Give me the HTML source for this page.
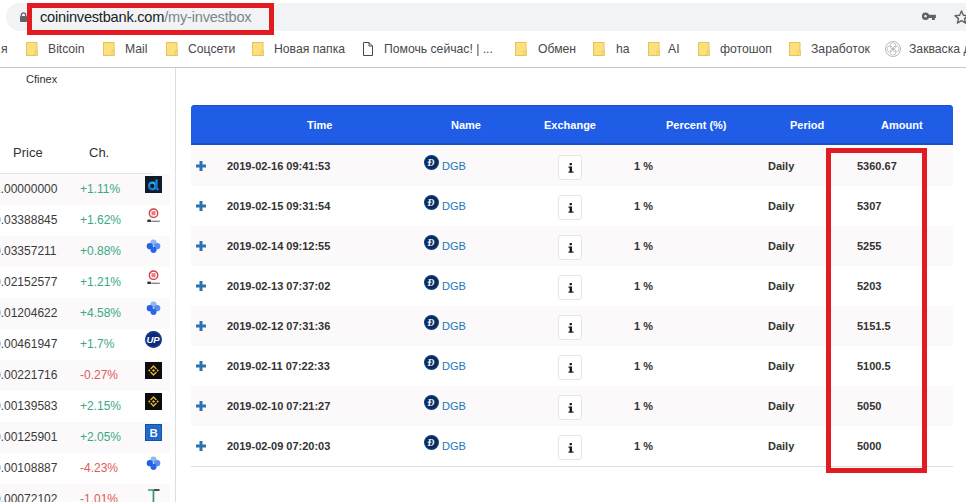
<!DOCTYPE html>
<html><head><meta charset="utf-8">
<style>
*{margin:0;padding:0;box-sizing:border-box}
html,body{width:966px;height:502px;overflow:hidden;background:#fff;font-family:"Liberation Sans",sans-serif}
.abs{position:absolute}
#omni{position:absolute;left:6px;top:3px;width:980px;height:28px;background:#f1f3f4;border-radius:14px}
#url{position:absolute;left:40px;top:9px;font-size:14.6px;letter-spacing:-0.22px;color:#202124;white-space:nowrap}
#url span{color:#80868b}
#redbox{position:absolute;left:27px;top:3px;width:247px;height:32px;border:5px solid #e21b23}
#bm{position:absolute;left:0;top:34px;width:966px;height:34px;border-bottom:1px solid #c8c8c8}
.bt{position:absolute;top:42px;font-size:12.2px;color:#46494d;white-space:nowrap}
.fd{position:absolute;top:42px}
#vline{position:absolute;left:175px;top:68px;width:1px;height:434px;background:#dedede}
.lh{position:absolute;top:145px;font-size:13px;color:#333;}
#lhline{position:absolute;left:0;top:173px;width:153px;height:1px;background:#e5e5e5}
.lrow{position:absolute;left:0;width:170px;height:31px}
.lrow.s{background:#fbf9f9}
.pr{position:absolute;left:-6px;top:8px;font-size:12px;color:#3a3a3a;white-space:nowrap}
.ch{position:absolute;left:80px;top:8px;font-size:12px}
.g{color:#3aa889}.r{color:#e05a5a}
.ic{position:absolute;left:145px;top:2px;width:17px;height:17px}
#thead{position:absolute;left:191px;top:105px;width:762px;height:40px;background:#1f5de6;border-bottom:2px solid #1b4fc4;box-shadow:inset 0 1px 0 #1b52d2;border-radius:4px 4px 0 0}
.th{position:absolute;top:14px;font-size:11px;font-weight:bold;color:#fff;white-space:nowrap}
.trow{position:absolute;left:191px;width:762px;height:40px}
.trow.s{background:#fbf9f9}
.plus{position:absolute;left:5px;top:15px;width:10px;height:10px}
.tm{position:absolute;left:36px;top:14px;font-size:11px;font-weight:bold;color:#333;white-space:nowrap}
.dg{position:absolute;left:233px;top:9px;width:15px;height:15px}
.dgt{position:absolute;left:251px;top:14px;font-size:11px;color:#2277b8}
.ib{position:absolute;left:367px;top:9px;width:24px;height:25px;background:#fff;border:1px solid #e6e6e6;border-radius:3px}
.pc{position:absolute;left:443px;top:14px;font-size:11px;font-weight:bold;color:#333}
.pd{position:absolute;left:577px;top:14px;font-size:11px;font-weight:bold;color:#333}
.am{position:absolute;left:666px;top:14px;font-size:11px;font-weight:bold;color:#333}
#tline{position:absolute;left:191px;top:466px;width:762px;height:1px;background:#ddd}
#red2{position:absolute;left:826px;top:148px;width:101px;height:325px;border:5px solid #e21b23}
</style></head><body>
<div id="omni"></div>
<svg class="abs" style="left:20px;top:12px" width="7" height="10" viewBox="0 0 7 10"><path d="M1.3 4.2V3a2.2 2.2 0 0 1 4.4 0V4.2" fill="none" stroke="#5f6368" stroke-width="1.3"/><rect x="0" y="4" width="7" height="6" rx="0.8" fill="#5f6368"/></svg>
<div id="url">coininvestbank.com<span>/my-investbox</span></div>
<div id="redbox"></div>
<svg class="abs" style="left:922px;top:12px" width="15" height="9" viewBox="0 0 15 9"><circle cx="3.5" cy="4.2" r="2.5" fill="none" stroke="#5f6368" stroke-width="2.4"/><path d="M5.5 2.8h8.4v3.1h-1v2h-3v-2H5.5z" fill="#5f6368"/></svg>
<svg class="abs" style="left:953.5px;top:10px" width="15" height="14" viewBox="0 0 15 14"><path d="M7.5 1l1.9 4.2 4.6.4-3.5 3 1.1 4.5-4.1-2.4-4.1 2.4 1.1-4.5-3.5-3 4.6-.4z" fill="none" stroke="#5f6368" stroke-width="1.4" stroke-linejoin="round"/></svg>
<div id="bm"></div>
<div class="bt" style="left:1px">я</div>
<svg class="fd" style="left:26px" width="12" height="14" viewBox="0 0 12 14"><rect x="0.5" y="0.5" width="10.5" height="13" fill="#fde07e" stroke="#e9c25a"/><rect x="9" y="9" width="2.5" height="4.5" fill="#fde07e" stroke="#e9c25a" stroke-width="0.8"/></svg>
<div class="bt" style="left:48px">Bitcoin</div>
<svg class="fd" style="left:103px" width="12" height="14" viewBox="0 0 12 14"><rect x="0.5" y="0.5" width="10.5" height="13" fill="#fde07e" stroke="#e9c25a"/><rect x="9" y="9" width="2.5" height="4.5" fill="#fde07e" stroke="#e9c25a" stroke-width="0.8"/></svg>
<div class="bt" style="left:125px">Mail</div>
<svg class="fd" style="left:166px" width="12" height="14" viewBox="0 0 12 14"><rect x="0.5" y="0.5" width="10.5" height="13" fill="#fde07e" stroke="#e9c25a"/><rect x="9" y="9" width="2.5" height="4.5" fill="#fde07e" stroke="#e9c25a" stroke-width="0.8"/></svg>
<div class="bt" style="left:188px">Соцсети</div>
<svg class="fd" style="left:252px" width="12" height="14" viewBox="0 0 12 14"><rect x="0.5" y="0.5" width="10.5" height="13" fill="#fde07e" stroke="#e9c25a"/><rect x="9" y="9" width="2.5" height="4.5" fill="#fde07e" stroke="#e9c25a" stroke-width="0.8"/></svg>
<div class="bt" style="left:274px">Новая папка</div>
<svg class="fd" style="left:363px" width="10" height="14" viewBox="0 0 10 14"><path d="M0.5 0.5h5.5l3.5 3.5v9.5h-9z M6 0.5v3.5h3.5" fill="#fff" stroke="#4a4a4a" stroke-linejoin="miter"/></svg>
<div class="bt" style="left:384px">Помочь сейчас! | ...</div>
<svg class="fd" style="left:515px" width="12" height="14" viewBox="0 0 12 14"><rect x="0.5" y="0.5" width="10.5" height="13" fill="#fde07e" stroke="#e9c25a"/><rect x="9" y="9" width="2.5" height="4.5" fill="#fde07e" stroke="#e9c25a" stroke-width="0.8"/></svg>
<div class="bt" style="left:538px">Обмен</div>
<svg class="fd" style="left:593px" width="12" height="14" viewBox="0 0 12 14"><rect x="0.5" y="0.5" width="10.5" height="13" fill="#fde07e" stroke="#e9c25a"/><rect x="9" y="9" width="2.5" height="4.5" fill="#fde07e" stroke="#e9c25a" stroke-width="0.8"/></svg>
<div class="bt" style="left:616px">ha</div>
<svg class="fd" style="left:648px" width="12" height="14" viewBox="0 0 12 14"><rect x="0.5" y="0.5" width="10.5" height="13" fill="#fde07e" stroke="#e9c25a"/><rect x="9" y="9" width="2.5" height="4.5" fill="#fde07e" stroke="#e9c25a" stroke-width="0.8"/></svg>
<div class="bt" style="left:668px">AI</div>
<svg class="fd" style="left:698px" width="12" height="14" viewBox="0 0 12 14"><rect x="0.5" y="0.5" width="10.5" height="13" fill="#fde07e" stroke="#e9c25a"/><rect x="9" y="9" width="2.5" height="4.5" fill="#fde07e" stroke="#e9c25a" stroke-width="0.8"/></svg>
<div class="bt" style="left:720px">фотошоп</div>
<svg class="fd" style="left:789px" width="12" height="14" viewBox="0 0 12 14"><rect x="0.5" y="0.5" width="10.5" height="13" fill="#fde07e" stroke="#e9c25a"/><rect x="9" y="9" width="2.5" height="4.5" fill="#fde07e" stroke="#e9c25a" stroke-width="0.8"/></svg>
<div class="bt" style="left:811px">Заработок</div>
<svg class="abs" style="left:885px;top:41px" width="16" height="16" viewBox="0 0 16 16"><circle cx="8" cy="8" r="7.5" fill="none" stroke="#999" stroke-width="0.7"/><circle cx="8" cy="5" r="3" fill="none" stroke="#aaa" stroke-width="0.6"/><circle cx="8" cy="11" r="3" fill="none" stroke="#aaa" stroke-width="0.6"/><circle cx="5" cy="8" r="3" fill="none" stroke="#aaa" stroke-width="0.6"/><circle cx="11" cy="8" r="3" fill="none" stroke="#aaa" stroke-width="0.6"/></svg>
<div class="bt" style="left:909px">Закваска для</div>
<div id="vline"></div>
<div class="abs" style="left:26px;top:73px;font-size:11px;color:#333">Cfinex</div>
<div class="lh" style="left:13px">Price</div><div class="lh" style="left:89px">Ch.</div><div id="lhline"></div>
<div class="lrow s" style="top:174px"><div class="pr">1.00000000</div><div class="ch g">+1.11%</div><svg class="ic" viewBox="0 0 17 17"><defs><linearGradient id="adg" x1="0" y1="1" x2="1" y2="0"><stop offset="0" stop-color="#1a5fd0"/><stop offset="1" stop-color="#14d0f5"/></linearGradient></defs><rect width="17" height="17" fill="#111a2a"/><circle cx="7.3" cy="10" r="3.3" fill="none" stroke="url(#adg)" stroke-width="2.3"/><path d="M11.4 3.5V11.5Q11.6 13.2 13.4 13.8" fill="none" stroke="url(#adg)" stroke-width="2.2"/></svg></div>
<div class="lrow" style="top:205px"><div class="pr">0.03388845</div><div class="ch g">+1.62%</div><svg class="ic" viewBox="0 0 17 17"><circle cx="8.5" cy="6.2" r="4.2" fill="#fff" stroke="#d83c44" stroke-width="1.4"/><rect x="6.5" y="4.2" width="4" height="4" fill="#ee7a80"/><rect x="2.3" y="12.6" width="3.6" height="2.4" fill="#333"/><rect x="6.2" y="13.6" width="8.6" height="1.4" fill="#888"/></svg></div>
<div class="lrow s" style="top:236px"><div class="pr">0.03357211</div><div class="ch g">+0.88%</div><svg class="ic" viewBox="0 0 17 17"><circle cx="8.5" cy="4.6" r="3.1" fill="#8db8f2"/><circle cx="12.2" cy="8.2" r="3.1" fill="#5a8ef0"/><circle cx="4.8" cy="8.2" r="3.1" fill="#2462e2"/><circle cx="8.5" cy="11.8" r="3.1" fill="#2a66e6"/></svg></div>
<div class="lrow" style="top:267px"><div class="pr">0.02152577</div><div class="ch g">+1.21%</div><svg class="ic" viewBox="0 0 17 17"><circle cx="8.5" cy="6.2" r="4.2" fill="#fff" stroke="#d83c44" stroke-width="1.4"/><rect x="6.5" y="4.2" width="4" height="4" fill="#ee7a80"/><rect x="2.3" y="12.6" width="3.6" height="2.4" fill="#333"/><rect x="6.2" y="13.6" width="8.6" height="1.4" fill="#888"/></svg></div>
<div class="lrow s" style="top:298px"><div class="pr">0.01204622</div><div class="ch g">+4.58%</div><svg class="ic" viewBox="0 0 17 17"><circle cx="8.5" cy="4.6" r="3.1" fill="#8db8f2"/><circle cx="12.2" cy="8.2" r="3.1" fill="#5a8ef0"/><circle cx="4.8" cy="8.2" r="3.1" fill="#2462e2"/><circle cx="8.5" cy="11.8" r="3.1" fill="#2a66e6"/></svg></div>
<div class="lrow" style="top:329px"><div class="pr">0.00461947</div><div class="ch g">+1.7%</div><svg class="ic" viewBox="0 0 17 17"><circle cx="8.5" cy="8.5" r="8.5" fill="#0b2a7a"/><circle cx="8.5" cy="8.5" r="7.6" fill="none" stroke="#3a5aa0" stroke-width="0.5"/><text x="1.6" y="12.3" font-size="9.5" font-style="italic" font-weight="bold" fill="#fff" font-family="Liberation Sans" letter-spacing="-0.3">UP</text></svg></div>
<div class="lrow s" style="top:360px"><div class="pr">0.00221716</div><div class="ch r">-0.27%</div><svg class="ic" viewBox="0 0 17 17"><rect width="17" height="17" fill="#0c0c0c"/><path d="M8.5 7l1.5 1.5-1.5 1.5-1.5-1.5zM4.3 7.3l1.2 1.2-1.2 1.2-1.2-1.2zM12.7 7.3l1.2 1.2-1.2 1.2-1.2-1.2zM8.5 3l3.4 3.4-1 1-2.4-2.4-2.4 2.4-1-1zM8.5 14l3.4-3.4-1-1-2.4 2.4-2.4-2.4-1 1z" fill="#e8b53a"/></svg></div>
<div class="lrow" style="top:391px"><div class="pr">0.00139583</div><div class="ch g">+2.15%</div><svg class="ic" viewBox="0 0 17 17"><rect width="17" height="17" fill="#0c0c0c"/><path d="M8.5 7l1.5 1.5-1.5 1.5-1.5-1.5zM4.3 7.3l1.2 1.2-1.2 1.2-1.2-1.2zM12.7 7.3l1.2 1.2-1.2 1.2-1.2-1.2zM8.5 3l3.4 3.4-1 1-2.4-2.4-2.4 2.4-1-1zM8.5 14l3.4-3.4-1-1-2.4 2.4-2.4-2.4-1 1z" fill="#e8b53a"/></svg></div>
<div class="lrow s" style="top:422px"><div class="pr">0.00125901</div><div class="ch g">+2.05%</div><svg class="ic" viewBox="0 0 17 17"><rect width="17" height="17" fill="#1e66c8"/><rect x="0.5" y="0.5" width="16" height="16" fill="none" stroke="#1450a8" stroke-width="1"/><rect x="2" y="2" width="13" height="13" fill="none" stroke="#3b82dc" stroke-width="0.8" stroke-dasharray="1 1"/><text x="4.6" y="13.2" font-size="11.5" font-weight="bold" fill="#f4f8ff" font-family="Liberation Sans">B</text></svg></div>
<div class="lrow" style="top:453px"><div class="pr">0.00108887</div><div class="ch r">-4.23%</div><svg class="ic" viewBox="0 0 17 17"><circle cx="8.5" cy="4.6" r="3.1" fill="#8db8f2"/><circle cx="12.2" cy="8.2" r="3.1" fill="#5a8ef0"/><circle cx="4.8" cy="8.2" r="3.1" fill="#2462e2"/><circle cx="8.5" cy="11.8" r="3.1" fill="#2a66e6"/></svg></div>
<div class="lrow s" style="top:484px"><div class="pr">0.00072102</div><div class="ch r">-1.01%</div><svg class="ic" viewBox="0 0 17 17"><path d="M3 3.2h6v1.6H9.3V17H7.6V4.8H3z" fill="#2a9a78"/><path d="M9 3.2h5.5v1.6H9z" fill="#222"/></svg></div>
<div id="thead"><div class="th" style="left:116px">Time</div><div class="th" style="left:260px">Name</div><div class="th" style="left:353px">Exchange</div><div class="th" style="left:475px">Percent (%)</div><div class="th" style="left:599px">Period</div><div class="th" style="left:690px">Amount</div></div>
<div class="trow s" style="top:145px;height:1px"></div>
<div class="trow s" style="top:146px"><svg class="plus" viewBox="0 0 10 10"><path d="M3.5 0h3v3.5h3.5v3h-3.5v3.5h-3v-3.5h-3.5v-3h3.5z" fill="#2c71b0"/></svg><div class="tm">2019-02-16 09:41:53</div><svg class="dg" viewBox="0 0 15 15"><circle cx="7.5" cy="7.5" r="7.5" fill="#0b3a7a"/><circle cx="7.5" cy="7.5" r="6" fill="#062a5e"/><text x="3.6" y="11" font-size="9.5" font-weight="bold" font-style="italic" fill="#f4f6fa" font-family="Liberation Serif">D</text><path d="M3.5 7.2h4" stroke="#f4f6fa" stroke-width="1"/></svg><div class="dgt">DGB</div><div class="ib"><svg class="abs" style="left:8.5px;top:6.5px" width="6" height="10" viewBox="0 0 6 10"><rect x="1.6" y="0" width="2.4" height="2.2" rx="0.6" fill="#1a1a1a"/><path d="M0.5 3.4h3.5v5h1.5v1.4H0.5V8.4H1.6V4.8H0.5z" fill="#1a1a1a"/></svg></div><div class="pc">1 %</div><div class="pd">Daily</div><div class="am">5360.67</div></div>
<div class="trow" style="top:186px"><svg class="plus" viewBox="0 0 10 10"><path d="M3.5 0h3v3.5h3.5v3h-3.5v3.5h-3v-3.5h-3.5v-3h3.5z" fill="#2c71b0"/></svg><div class="tm">2019-02-15 09:31:54</div><svg class="dg" viewBox="0 0 15 15"><circle cx="7.5" cy="7.5" r="7.5" fill="#0b3a7a"/><circle cx="7.5" cy="7.5" r="6" fill="#062a5e"/><text x="3.6" y="11" font-size="9.5" font-weight="bold" font-style="italic" fill="#f4f6fa" font-family="Liberation Serif">D</text><path d="M3.5 7.2h4" stroke="#f4f6fa" stroke-width="1"/></svg><div class="dgt">DGB</div><div class="ib"><svg class="abs" style="left:8.5px;top:6.5px" width="6" height="10" viewBox="0 0 6 10"><rect x="1.6" y="0" width="2.4" height="2.2" rx="0.6" fill="#1a1a1a"/><path d="M0.5 3.4h3.5v5h1.5v1.4H0.5V8.4H1.6V4.8H0.5z" fill="#1a1a1a"/></svg></div><div class="pc">1 %</div><div class="pd">Daily</div><div class="am">5307</div></div>
<div class="trow s" style="top:226px"><svg class="plus" viewBox="0 0 10 10"><path d="M3.5 0h3v3.5h3.5v3h-3.5v3.5h-3v-3.5h-3.5v-3h3.5z" fill="#2c71b0"/></svg><div class="tm">2019-02-14 09:12:55</div><svg class="dg" viewBox="0 0 15 15"><circle cx="7.5" cy="7.5" r="7.5" fill="#0b3a7a"/><circle cx="7.5" cy="7.5" r="6" fill="#062a5e"/><text x="3.6" y="11" font-size="9.5" font-weight="bold" font-style="italic" fill="#f4f6fa" font-family="Liberation Serif">D</text><path d="M3.5 7.2h4" stroke="#f4f6fa" stroke-width="1"/></svg><div class="dgt">DGB</div><div class="ib"><svg class="abs" style="left:8.5px;top:6.5px" width="6" height="10" viewBox="0 0 6 10"><rect x="1.6" y="0" width="2.4" height="2.2" rx="0.6" fill="#1a1a1a"/><path d="M0.5 3.4h3.5v5h1.5v1.4H0.5V8.4H1.6V4.8H0.5z" fill="#1a1a1a"/></svg></div><div class="pc">1 %</div><div class="pd">Daily</div><div class="am">5255</div></div>
<div class="trow" style="top:266px"><svg class="plus" viewBox="0 0 10 10"><path d="M3.5 0h3v3.5h3.5v3h-3.5v3.5h-3v-3.5h-3.5v-3h3.5z" fill="#2c71b0"/></svg><div class="tm">2019-02-13 07:37:02</div><svg class="dg" viewBox="0 0 15 15"><circle cx="7.5" cy="7.5" r="7.5" fill="#0b3a7a"/><circle cx="7.5" cy="7.5" r="6" fill="#062a5e"/><text x="3.6" y="11" font-size="9.5" font-weight="bold" font-style="italic" fill="#f4f6fa" font-family="Liberation Serif">D</text><path d="M3.5 7.2h4" stroke="#f4f6fa" stroke-width="1"/></svg><div class="dgt">DGB</div><div class="ib"><svg class="abs" style="left:8.5px;top:6.5px" width="6" height="10" viewBox="0 0 6 10"><rect x="1.6" y="0" width="2.4" height="2.2" rx="0.6" fill="#1a1a1a"/><path d="M0.5 3.4h3.5v5h1.5v1.4H0.5V8.4H1.6V4.8H0.5z" fill="#1a1a1a"/></svg></div><div class="pc">1 %</div><div class="pd">Daily</div><div class="am">5203</div></div>
<div class="trow s" style="top:306px"><svg class="plus" viewBox="0 0 10 10"><path d="M3.5 0h3v3.5h3.5v3h-3.5v3.5h-3v-3.5h-3.5v-3h3.5z" fill="#2c71b0"/></svg><div class="tm">2019-02-12 07:31:36</div><svg class="dg" viewBox="0 0 15 15"><circle cx="7.5" cy="7.5" r="7.5" fill="#0b3a7a"/><circle cx="7.5" cy="7.5" r="6" fill="#062a5e"/><text x="3.6" y="11" font-size="9.5" font-weight="bold" font-style="italic" fill="#f4f6fa" font-family="Liberation Serif">D</text><path d="M3.5 7.2h4" stroke="#f4f6fa" stroke-width="1"/></svg><div class="dgt">DGB</div><div class="ib"><svg class="abs" style="left:8.5px;top:6.5px" width="6" height="10" viewBox="0 0 6 10"><rect x="1.6" y="0" width="2.4" height="2.2" rx="0.6" fill="#1a1a1a"/><path d="M0.5 3.4h3.5v5h1.5v1.4H0.5V8.4H1.6V4.8H0.5z" fill="#1a1a1a"/></svg></div><div class="pc">1 %</div><div class="pd">Daily</div><div class="am">5151.5</div></div>
<div class="trow" style="top:346px"><svg class="plus" viewBox="0 0 10 10"><path d="M3.5 0h3v3.5h3.5v3h-3.5v3.5h-3v-3.5h-3.5v-3h3.5z" fill="#2c71b0"/></svg><div class="tm">2019-02-11 07:22:33</div><svg class="dg" viewBox="0 0 15 15"><circle cx="7.5" cy="7.5" r="7.5" fill="#0b3a7a"/><circle cx="7.5" cy="7.5" r="6" fill="#062a5e"/><text x="3.6" y="11" font-size="9.5" font-weight="bold" font-style="italic" fill="#f4f6fa" font-family="Liberation Serif">D</text><path d="M3.5 7.2h4" stroke="#f4f6fa" stroke-width="1"/></svg><div class="dgt">DGB</div><div class="ib"><svg class="abs" style="left:8.5px;top:6.5px" width="6" height="10" viewBox="0 0 6 10"><rect x="1.6" y="0" width="2.4" height="2.2" rx="0.6" fill="#1a1a1a"/><path d="M0.5 3.4h3.5v5h1.5v1.4H0.5V8.4H1.6V4.8H0.5z" fill="#1a1a1a"/></svg></div><div class="pc">1 %</div><div class="pd">Daily</div><div class="am">5100.5</div></div>
<div class="trow s" style="top:386px"><svg class="plus" viewBox="0 0 10 10"><path d="M3.5 0h3v3.5h3.5v3h-3.5v3.5h-3v-3.5h-3.5v-3h3.5z" fill="#2c71b0"/></svg><div class="tm">2019-02-10 07:21:27</div><svg class="dg" viewBox="0 0 15 15"><circle cx="7.5" cy="7.5" r="7.5" fill="#0b3a7a"/><circle cx="7.5" cy="7.5" r="6" fill="#062a5e"/><text x="3.6" y="11" font-size="9.5" font-weight="bold" font-style="italic" fill="#f4f6fa" font-family="Liberation Serif">D</text><path d="M3.5 7.2h4" stroke="#f4f6fa" stroke-width="1"/></svg><div class="dgt">DGB</div><div class="ib"><svg class="abs" style="left:8.5px;top:6.5px" width="6" height="10" viewBox="0 0 6 10"><rect x="1.6" y="0" width="2.4" height="2.2" rx="0.6" fill="#1a1a1a"/><path d="M0.5 3.4h3.5v5h1.5v1.4H0.5V8.4H1.6V4.8H0.5z" fill="#1a1a1a"/></svg></div><div class="pc">1 %</div><div class="pd">Daily</div><div class="am">5050</div></div>
<div class="trow" style="top:426px"><svg class="plus" viewBox="0 0 10 10"><path d="M3.5 0h3v3.5h3.5v3h-3.5v3.5h-3v-3.5h-3.5v-3h3.5z" fill="#2c71b0"/></svg><div class="tm">2019-02-09 07:20:03</div><svg class="dg" viewBox="0 0 15 15"><circle cx="7.5" cy="7.5" r="7.5" fill="#0b3a7a"/><circle cx="7.5" cy="7.5" r="6" fill="#062a5e"/><text x="3.6" y="11" font-size="9.5" font-weight="bold" font-style="italic" fill="#f4f6fa" font-family="Liberation Serif">D</text><path d="M3.5 7.2h4" stroke="#f4f6fa" stroke-width="1"/></svg><div class="dgt">DGB</div><div class="ib"><svg class="abs" style="left:8.5px;top:6.5px" width="6" height="10" viewBox="0 0 6 10"><rect x="1.6" y="0" width="2.4" height="2.2" rx="0.6" fill="#1a1a1a"/><path d="M0.5 3.4h3.5v5h1.5v1.4H0.5V8.4H1.6V4.8H0.5z" fill="#1a1a1a"/></svg></div><div class="pc">1 %</div><div class="pd">Daily</div><div class="am">5000</div></div>
<div id="tline"></div>
<div id="red2"></div>
</body></html>
